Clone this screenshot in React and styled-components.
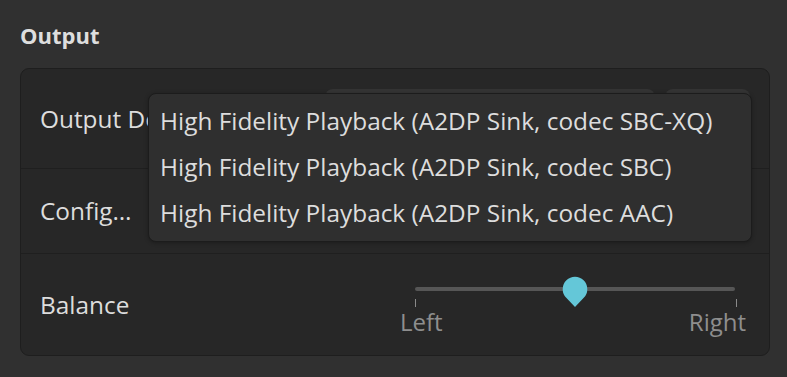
import React from "react";
import styled, { createGlobalStyle } from "styled-components";

const GlobalStyle = createGlobalStyle`
  html, body {
    margin: 0;
    background: #303030;
  }
  body {
    font-family: "Open Sans", "Noto Sans", sans-serif;
    color: #dddddd;
  }
`;

const Page = styled.div`
  position: relative;
  width: 787px;
  height: 377px;
  padding: 19px 17px 0 20px;
  box-sizing: border-box;
  overflow: hidden;
`;

const Heading = styled.h2`
  margin: 0 0 17px;
  font-size: 22px;
  font-weight: 700;
  line-height: 32px;
  color: #dedede;
`;

const ListBox = styled.div`
  width: 750px;
  box-sizing: border-box;
  background: #272727;
  border: 1px solid #1e1e1e;
  border-radius: 9px;
`;

const Row = styled.div`
  display: flex;
  align-items: center;
  height: ${({ $height }) => $height}px;
  padding: 0 19px;
  & + & {
    border-top: 1px solid #1f1f1f;
  }
`;

const Label = styled.span`
  flex: 1;
  min-width: 0;
  font-size: 24.4px;
  line-height: 32px;
  white-space: nowrap;
  overflow: hidden;
  text-overflow: ellipsis;
`;

const Controls = styled.div`
  display: flex;
  gap: 10px;
  margin-left: 12px;
`;

const Combo = styled.div`
  width: ${({ $width }) => $width}px;
  height: 60px;
  border-radius: 8px;
  background: #343434;
`;

const Slider = styled.div`
  width: 350px;
  margin: 4px 0 0 12px;
  display: flex;
  flex-direction: column;
`;

const TrackArea = styled.div`
  position: relative;
  height: 23px;
  margin: 0 15px;
`;

const Track = styled.div`
  position: absolute;
  left: 0;
  right: 0;
  top: 11px;
  height: 4px;
  border-radius: 2px;
  background: #565656;
`;

const Handle = styled.svg`
  position: absolute;
  top: 0;
  left: calc(${({ $value }) => $value}% - 13px);
`;

const Ticks = styled.div`
  display: flex;
  justify-content: space-between;
  height: 8px;
  padding: 0 13px 0 15px;
`;

const Tick = styled.span`
  width: 1px;
  height: 8px;
  background: #8a8a8a;
`;

const MarkLabels = styled.div`
  display: flex;
  justify-content: space-between;
  padding-right: 4px;
  font-size: 24px;
  line-height: 30px;
  color: #8e8e8e;
`;

const Popover = styled.div`
  position: absolute;
  left: 148px;
  top: 93px;
  width: 604px;
  box-sizing: border-box;
  padding: 3px 0 6px;
  background: #2f2f2f;
  border: 1px solid #1c1c1c;
  border-radius: 8px;
  box-shadow: 0 1px 4px rgba(0, 0, 0, 0.3);
`;

const Item = styled.div`
  display: flex;
  align-items: center;
  height: 46px;
  padding: 0 11px;
  font-size: 24.4px;
  white-space: nowrap;
  color: #dddddd;
`;

const profiles = [
  "High Fidelity Playback (A2DP Sink, codec SBC-XQ)",
  "High Fidelity Playback (A2DP Sink, codec SBC)",
  "High Fidelity Playback (A2DP Sink, codec AAC)",
];

const App = () => {
  const balance = 50;

  return (
    <Page>
      <GlobalStyle />
      <Heading>Output</Heading>
      <ListBox>
        <Row $height={99}>
          <Label>Output Device</Label>
          <Controls>
            <Combo $width={330} />
            <Combo $width={85} />
          </Controls>
        </Row>
        <Row $height={84}>
          <Label>Configuration</Label>
          <Controls>
            <Combo $width={602} />
          </Controls>
        </Row>
        <Row $height={101}>
          <Label>Balance</Label>
          <Slider>
            <TrackArea>
              <Track />
              <Handle $value={balance} width="26" height="32" viewBox="0 0 26 32">
                <path
                  d="M13 31 L4 21.5 A12.3 12.3 0 1 1 22 21.5 Z"
                  fill="#64c7d8"
                />
              </Handle>
            </TrackArea>
            <Ticks>
              <Tick />
              <Tick />
            </Ticks>
            <MarkLabels>
              <span>Left</span>
              <span>Right</span>
            </MarkLabels>
          </Slider>
        </Row>
      </ListBox>
      <Popover>
        {profiles.map((p) => (
          <Item key={p}>{p}</Item>
        ))}
      </Popover>
    </Page>
  );
};

export default App;
